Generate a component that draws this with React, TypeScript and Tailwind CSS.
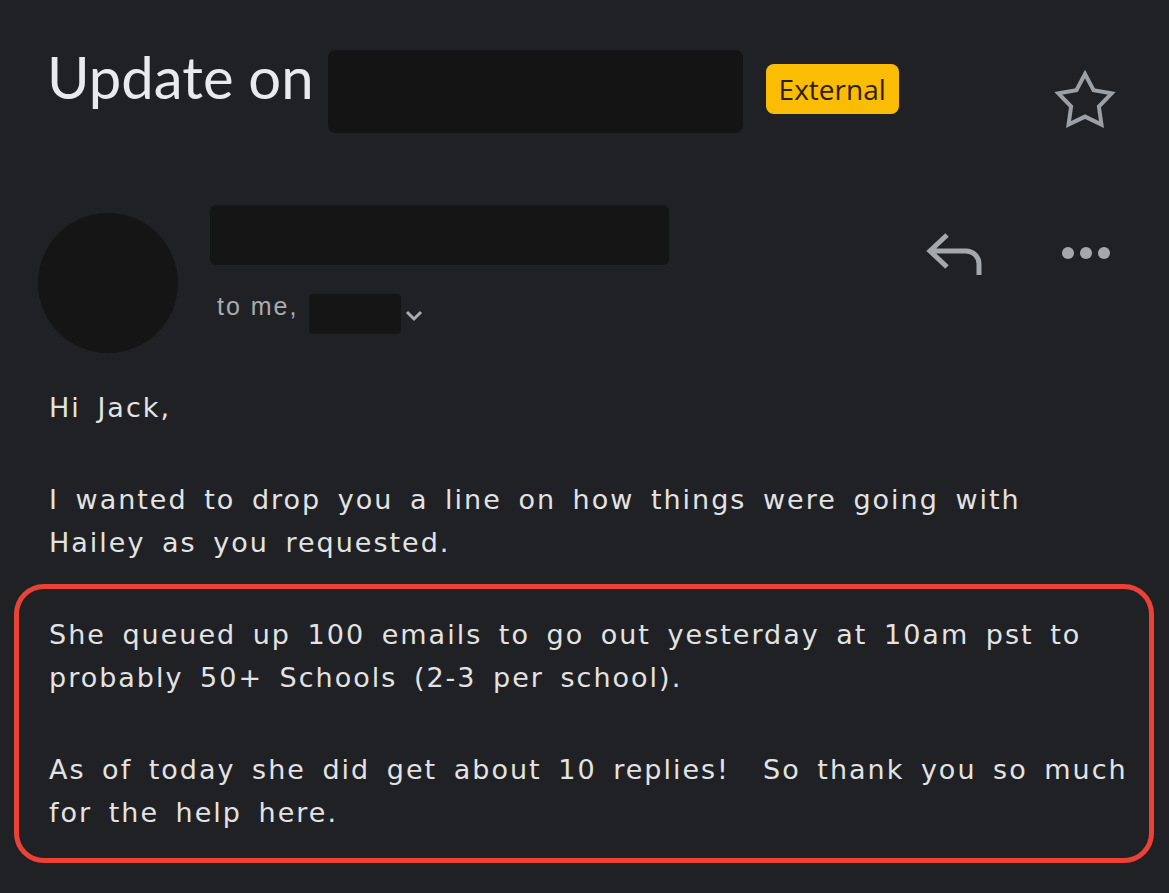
import React from 'react';

const body = "text-[#e3e3e3] text-[27px] leading-[43px] tracking-[2px] [word-spacing:6px] whitespace-pre";

const StarIcon: React.FC = () => (
  <svg width="64" height="64" viewBox="0 0 64 64" fill="none">
    <polygon
      points="32,4 40.58,20.19 58.63,23.35 45.89,36.51 48.46,54.65 32,46.6 15.54,54.65 18.11,36.51 5.37,23.35 23.42,20.19"
      stroke="#9aa0a6"
      strokeWidth="4"
      strokeLinejoin="miter"
    />
  </svg>
);

const ReplyIcon: React.FC = () => (
  <svg width="58" height="46" viewBox="0 0 58 46" fill="none">
    <path
      d="M21 3 L4 19 L21 35 M4 19 H40 A13 13 0 0 1 53 32 V43"
      stroke="#a4a8ad"
      strokeWidth="5"
    />
  </svg>
);

const App: React.FC = () => {
  return (
    <div className="w-[1169px] h-[893px] bg-[#202124] overflow-hidden" style={{ fontFamily: '"DejaVu Sans", sans-serif' }}>
      {/* subject line */}
      <div className="flex items-start h-[205px] pl-[47px] pr-[52px]">
        <h1 className="mt-[48px] text-[58px] leading-none text-[#e8eaed] font-normal font-['Lato',sans-serif]">
          Update on
        </h1>
        <div className="mt-[50px] ml-[14px] w-[415px] h-[83px] rounded-[8px] bg-[#141414]" />
        <span className="mt-[64px] ml-[23px] h-[50px] px-[13px] flex items-center rounded-[8px] bg-[#fbbc04] text-[#2b2102] text-[28px] font-medium font-['Open_Sans',sans-serif]">
          External
        </span>
        <div className="ml-auto mt-[70px]">
          <StarIcon />
        </div>
      </div>

      {/* sender */}
      <div className="flex items-start h-[181px] pl-[38px] pr-[59px]">
        <div className="mt-[8px] w-[140px] h-[140px] rounded-full bg-[#151515]" />
        <div className="ml-[32px] flex flex-col">
          <div className="w-[459px] h-[60px] rounded-[6px] bg-[#151515]" />
          <div className="mt-[29px] flex items-start h-[40px]">
            <span className="ml-[7px] text-[25px] leading-none tracking-[2px] text-[#a8acb1] font-['Liberation_Sans',sans-serif]">
              to me,
            </span>
            <div className="ml-[11px] w-[92px] h-[40px] rounded-[4px] bg-[#151515]" />
            <svg className="mt-[14px] ml-[2px]" width="22" height="14" viewBox="0 0 22 14" fill="none">
              <path d="M4 4 L11 11 L18 4" stroke="#a8acb1" strokeWidth="3" />
            </svg>
          </div>
        </div>
        <div className="ml-auto mt-[27px]">
          <ReplyIcon />
        </div>
        <div className="ml-[78px] mt-[42px] flex gap-[6px]">
          <span className="w-[12px] h-[12px] rounded-full bg-[#a4a8ad]" />
          <span className="w-[12px] h-[12px] rounded-full bg-[#a4a8ad]" />
          <span className="w-[12px] h-[12px] rounded-full bg-[#a4a8ad]" />
        </div>
      </div>

      {/* message body */}
      <div className="pl-[49px]">
        <p className={body}>Hi Jack,</p>
        <p className={`${body} mt-[49px]`}>
          I wanted to drop you a line on how things were going with{'\n'}Hailey as you requested.
        </p>
      </div>
      <div className="mt-[20px] ml-[14px] w-[1140px] border-[5px] border-[#ec4136] rounded-[30px] pl-[30px] pt-[24px] pb-[24px]">
        <p className={body}>
          She queued up 100 emails to go out yesterday at 10am pst to{'\n'}probably 50+ Schools (2-3 per school).
        </p>
        <p className={`${body} mt-[49px]`}>
          As of today she did get about 10 replies!  So thank you so much{'\n'}for the help here.
        </p>
      </div>
    </div>
  );
};

export default App;
